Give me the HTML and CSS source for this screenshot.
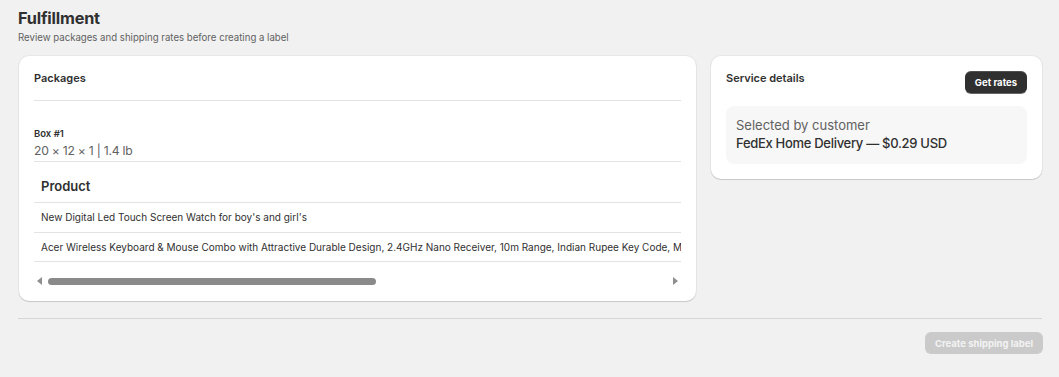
FILE: index.html
```html
<!DOCTYPE html>
<html lang="en">
<head>
<meta charset="utf-8">
<title>Fulfillment</title>
<link rel="stylesheet" href="styles.css">
</head>
<body>
<div class="page">
  <header class="page-header">
    <h1 class="page-title">Fulfillment</h1>
    <p class="page-subtitle">Review packages and shipping rates before creating a label</p>
  </header>

  <div class="layout">
    <section class="card packages-card">
      <h2 class="card-title">Packages</h2>
      <div class="divider"></div>
      <div class="box-info">
        <div class="box-name">Box #1</div>
        <div class="box-dims">20 × 12 × 1 | 1.4 lb</div>
      </div>
      <div class="table-wrap">
        <div class="table-scroll">
          <table class="product-table">
            <thead>
              <tr><th>Product</th></tr>
            </thead>
            <tbody>
              <tr><td>New Digital Led Touch Screen Watch for boy's and girl's</td></tr>
              <tr><td>Acer Wireless Keyboard &amp; Mouse Combo with Attractive Durable Design, 2.4GHz Nano Receiver, 10m Range, Indian Rupee Key Code, Multimedia Keys, Black</td></tr>
            </tbody>
          </table>
        </div>
        <div class="scrollbar">
          <span class="arrow arrow-left"></span>
          <div class="track"><div class="thumb"></div></div>
          <span class="arrow arrow-right"></span>
        </div>
      </div>
    </section>

    <section class="card service-card">
      <div class="service-head">
        <h2 class="card-title">Service details</h2>
        <button class="btn btn-dark" type="button">Get rates</button>
      </div>
      <div class="service-box">
        <div class="service-label">Selected by customer</div>
        <div class="service-value">FedEx Home Delivery — $0.29 USD</div>
      </div>
    </section>
  </div>

  <div class="footer-divider"></div>
  <div class="footer">
    <button class="btn btn-disabled" type="button" disabled>Create shipping label</button>
  </div>
</div>
</body>
</html>
```

FILE: styles.css
```css
* { box-sizing: border-box; }

html, body {
  margin: 0;
  background: #f1f1f1;
  font-family: "Inter", "Noto Sans", sans-serif;
  color: #303030;
}

.page {
  padding: 7px 17px 0 18px;
}

.page-header { margin-bottom: 12px; }

.page-title {
  margin: 0;
  font-size: 16.3px;
  line-height: 22px;
  font-weight: 700;
  color: #303030;
  letter-spacing: -0.2px;
}

.page-subtitle {
  margin: 2px 0 0;
  font-size: 9.65px;
  line-height: 13px;
  color: #616161;
}

.layout {
  display: grid;
  grid-template-columns: minmax(0, 1fr) 331px;
  gap: 15px;
  align-items: start;
  padding-left: 1px;
}

.card {
  min-width: 0;
  background: #ffffff;
  border-radius: 10px;
  box-shadow: 0 1px 1px rgba(0,0,0,0.14), 0 0 0 1px rgba(0,0,0,0.04);
  padding: 14px 15px 7px;
}

.card-title {
  margin: 0;
  font-size: 11px;
  line-height: 16px;
  font-weight: 600;
  color: #303030;
}

.divider {
  height: 1px;
  background: #e3e3e3;
  margin-top: 14px;
}

.box-info {
  padding-top: 26px;
  padding-bottom: 1px;
  border-bottom: 1px solid #e3e3e3;
}

.box-name {
  font-size: 9.5px;
  line-height: 13px;
  font-weight: 600;
  color: #303030;
  margin-bottom: 2px;
}

.box-dims {
  font-size: 12.2px;
  line-height: 18px;
  color: #616161;
  letter-spacing: -0.25px;
}

.table-scroll {
  overflow: hidden;
}

.product-table {
  border-collapse: collapse;
  white-space: nowrap;
  width: max-content;
  min-width: 100%;
}

.product-table th {
  text-align: left;
  font-size: 13px;
  line-height: 16px;
  font-weight: 600;
  padding: 16px 7px 8px;
  color: #303030;
  border-bottom: 1px solid #e3e3e3;
}

.product-table td {
  font-size: 10px;
  line-height: 14px;
  height: 29.5px;
  padding: 0 7px;
  color: #303030;
  border-bottom: 1px solid #e3e3e3;
}

.scrollbar {
  display: flex;
  align-items: center;
  height: 26px;
  margin-top: 6px;
  padding: 0 3px;
  gap: 6px;
}

.arrow {
  width: 0;
  height: 0;
  border-top: 4px solid transparent;
  border-bottom: 4px solid transparent;
}
.arrow-left { border-right: 5px solid #8f8f8f; }
.arrow-right { border-left: 5px solid #8f8f8f; }

.track {
  flex: 1;
  height: 7px;
}

.thumb {
  width: 328px;
  height: 7px;
  border-radius: 4px;
  background: #8a8a8a;
}

.service-card { padding-bottom: 15px; }

.service-head {
  display: flex;
  justify-content: space-between;
  align-items: flex-start;
}

.btn {
  font-family: inherit;
  font-size: 9.5px;
  font-weight: 700;
  border: none;
  border-radius: 6px;
  height: 22px;
  padding: 0 10px;
  cursor: pointer;
}

.btn-dark {
  margin-top: 1px;
  background: #303030;
  color: #ffffff;
  box-shadow: 0 1px 0 rgba(0,0,0,0.6), inset 0 1px 0 rgba(255,255,255,0.15);
}

.btn-disabled {
  background: #cacaca;
  color: #f3f3f3;
  cursor: default;
}

.service-box {
  margin-top: 13px;
  background: #f7f7f7;
  border-radius: 8px;
  padding: 10px 10px 11px;
}

.service-label {
  font-size: 13px;
  line-height: 18px;
  color: #616161;
}

.service-value {
  font-size: 13px;
  line-height: 19px;
  font-weight: 500;
  color: #303030;
  letter-spacing: -0.3px;
}

.footer-divider {
  height: 1px;
  background: #d6d6d6;
  margin-top: 17px;
}

.footer {
  display: flex;
  justify-content: flex-end;
  padding-top: 13px;
  margin-right: -1px;
}
```
